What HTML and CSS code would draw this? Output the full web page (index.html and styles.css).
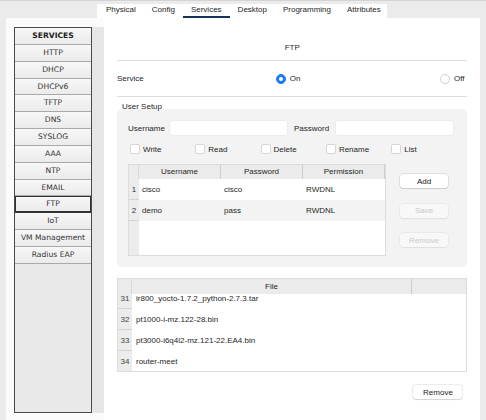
FILE: index.html
```html
<!DOCTYPE html>
<html>
<head>
    <title>Server - Services - FTP</title>
    <meta name="viewport" content="width=device-width, initial-scale=1">
    <link rel="stylesheet" href="styles.css">
</head>
<body>
    <div class="tabs">
        <span class="tab">Physical</span>
        <span class="tab">Config</span>
        <span class="tab active">Services</span>
        <span class="tab">Desktop</span>
        <span class="tab">Programming</span>
        <span class="tab">Attributes</span>
    </div>

    <div class="panel">
        <div class="side">
            <div class="side-wrap">
                <ul class="services">
                    <li class="head">SERVICES</li>
                    <li>HTTP</li>
                    <li>DHCP</li>
                    <li>DHCPv6</li>
                    <li>TFTP</li>
                    <li>DNS</li>
                    <li>SYSLOG</li>
                    <li>AAA</li>
                    <li>NTP</li>
                    <li>EMAIL</li>
                    <li class="active">FTP</li>
                    <li>IoT</li>
                    <li>VM Management</li>
                    <li>Radius EAP</li>
                </ul>
            </div>
        </div>

        <div class="content">
            <div class="title">FTP</div>
            <div class="service-row">
                <span>Service</span>
                <span class="radio radio-on"><span class="dot checked"></span>On</span>
                <span class="radio radio-off"><span class="dot"></span>Off</span>
            </div>

            <div class="legend">User Setup</div>
            <div class="setup">
                <div class="creds">
                    <span>Username</span>
                    <span class="field"></span>
                    <span></span>
                    <span>Password</span>
                    <span class="field"></span>
                </div>
                <div class="perms">
                    <span class="perm"><span class="check"></span>Write</span>
                    <span class="perm"><span class="check"></span>Read</span>
                    <span class="perm"><span class="check"></span>Delete</span>
                    <span class="perm"><span class="check"></span>Rename</span>
                    <span class="perm"><span class="check"></span>List</span>
                </div>
                <div class="users">
                    <div class="utable">
                        <div class="urow uhead"><span class="num"></span><span>Username</span><span>Password</span><span>Permission</span></div>
                        <div class="urow"><span class="num">1</span><span>cisco</span><span>cisco</span><span>RWDNL</span></div>
                        <div class="urow alt"><span class="num">2</span><span>demo</span><span>pass</span><span>RWDNL</span></div>
                        <div class="urow filler"><span class="num"></span></div>
                    </div>
                    <div class="actions">
                        <button>Add</button>
                        <button disabled>Save</button>
                        <button disabled>Remove</button>
                    </div>
                </div>
            </div>

            <div class="files">
                <div class="fhead"><span class="num"></span><span class="fname">File</span><span></span></div>
                <div class="fbody">
                    <div class="frow"><span class="num">31</span><span class="fname">ir800_yocto-1.7.2_python-2.7.3.tar</span></div>
                    <div class="frow"><span class="num">32</span><span class="fname">pt1000-i-mz.122-28.bin</span></div>
                    <div class="frow"><span class="num">33</span><span class="fname">pt3000-i6q4l2-mz.121-22.EA4.bin</span></div>
                    <div class="frow"><span class="num">34</span><span class="fname">router-meet</span></div>
                </div>
            </div>
            <div class="file-actions">
                <button class="wide">Remove</button>
            </div>
        </div>
    </div>
</body>
</html>
```

FILE: styles.css
```css
* {
    box-sizing: border-box;
}
body {
    margin: 0;
    height: 420px;
    overflow: hidden;
    background: #ebebeb;
    border-top: 1px solid #d4d4d4;
    font-family: "Liberation Sans", Arial, sans-serif;
    font-size: 8px;
    color: #262626;
}
.tabs {
    display: flex;
    width: 290px;
    height: 14px;
    margin: 3px 0 0 97px;
    padding-left: 1px;
    background: #fff;
}
.tab {
    height: 14px;
    padding: 0 8px;
    line-height: 12px;
    border-bottom: 2px solid transparent;
}
.tab.active {
    border-bottom-color: #14345a;
}
.panel {
    display: flex;
    height: 402px;
    margin: 0 6px;
    background: #fff;
}
.side {
    width: 98px;
    padding: 9px 0 0 8px;
    background: #fbfbfb;
}
.side-wrap {
    width: 90px;
    height: 386px;
    background: #e6e6e6;
}
.services {
    list-style: none;
    margin: 0;
    padding: 0;
    width: 78px;
    height: 100%;
    border: 1px solid #4a4a4a;
    background: #e9e9e9;
    font-family: "DejaVu Sans", Verdana, sans-serif;
    font-size: 7.6px;
    color: #333;
}
.services li {
    height: 16.85px;
    line-height: 15.85px;
    text-align: center;
    border-bottom: 1px solid #a9a9a9;
    background: linear-gradient(#f7f7f7, #ebebeb);
}
.services .head {
    font-weight: bold;
    color: #222;
}
.services .active {
    border-bottom-color: #333;
    box-shadow: inset 0 0 0 1px #333;
}
.content {
    flex: 1;
    padding: 24px 16px 0 13px;
}
.title {
    line-height: 12px;
    text-align: center;
    padding-bottom: 6px;
    border-bottom: 1px solid #dedede;
}
.service-row {
    display: flex;
    align-items: center;
    height: 36px;
    border-bottom: 1px solid #dedede;
}
.radio {
    display: flex;
    align-items: center;
    gap: 4px;
}
.radio-on {
    margin-left: 132px;
}
.radio-off {
    margin-left: auto;
    margin-right: 3px;
}
.dot {
    width: 10px;
    height: 10px;
    border-radius: 50%;
    border: 1px solid #d4d4d4;
    background: #fff;
    box-shadow: 0 0.5px 1px rgba(0, 0, 0, 0.06);
}
.dot.checked {
    display: flex;
    align-items: center;
    justify-content: center;
    border-color: #1c7cf3;
    background: #1c7cf3;
}
.dot.checked::after {
    content: "";
    width: 4px;
    height: 4px;
    border-radius: 50%;
    background: #fff;
}
.legend {
    padding: 5px 0 0 5px;
    line-height: 10px;
}
.setup {
    height: 158px;
    margin-top: -3px;
    padding: 12px 11px 11px;
    border-radius: 5px;
    background: #f3f3f3;
}
.creds {
    display: grid;
    grid-template-columns: 42px 117px 7px 42px 117px;
    align-items: center;
    height: 14px;
}
.field {
    height: 14px;
    border-radius: 2px;
    background: #fff;
    box-shadow: 0 0 0 0.5px #e6e6e6;
}
.perms {
    display: flex;
    height: 10px;
    margin-top: 9px;
    padding-left: 2px;
}
.perm {
    display: flex;
    align-items: center;
    gap: 3px;
    width: 65.3px;
}
.check {
    width: 10px;
    height: 10px;
    border: 1px solid #d6d6d6;
    border-radius: 2px;
    background: #fff;
}
.users {
    display: flex;
    align-items: flex-start;
    margin-top: 10px;
}
.utable {
    display: flex;
    flex-direction: column;
    width: 258px;
    height: 92px;
    border: 1px solid #dcdcdc;
    background: #fff;
}
.urow {
    display: flex;
    height: 21px;
    line-height: 21px;
}
.urow span {
    width: 82px;
    padding-left: 3px;
}
.urow .num {
    width: 10px;
    padding: 0;
    text-align: center;
    color: #333;
    background: #ececec;
    border-bottom: 1px solid #d4d4d4;
}
.urow.alt {
    background: #f3f3f3;
}
.uhead {
    height: 14px;
    line-height: 14px;
    background: #ebebeb;
}
.uhead span {
    padding: 0;
    text-align: center;
    border-right: 1px solid #cdcdcd;
}
.uhead .num {
    border-bottom: none;
    border-right: 1px solid #dadada;
}
.urow.filler {
    flex: 1;
}
.urow.filler .num {
    border-bottom: none;
}
.actions {
    display: flex;
    flex-direction: column;
    gap: 15.5px;
    margin: 10px 0 0 14px;
}
button {
    width: 48px;
    height: 14px;
    padding: 0;
    border: none;
    border-radius: 3px;
    font: inherit;
    color: #222;
    background: #fff;
    box-shadow: 0 0 0 0.5px rgba(0, 0, 0, 0.16), 0 1px 1px rgba(0, 0, 0, 0.1);
}
button:disabled {
    color: #cacaca;
    background: #f8f8f8;
    box-shadow: 0 0 0 0.5px rgba(0, 0, 0, 0.07), 0 1px 1px rgba(0, 0, 0, 0.04);
}
button.wide {
    width: 49px;
}
.files {
    height: 94px;
    margin-top: 11px;
    border: 1px solid #dcdcdc;
    background: #fff;
}
.fhead {
    display: flex;
    height: 15px;
    line-height: 15px;
    background: #ebebeb;
}
.fhead .num {
    width: 14px;
    border-right: 1px solid #dadada;
}
.fhead .fname {
    text-align: center;
    border-right: 1px solid #cdcdcd;
}
.fname {
    width: 280px;
}
.fbody {
    height: 77px;
    overflow: hidden;
}
.frow {
    display: flex;
    height: 21px;
    line-height: 21px;
}
.frow:first-child {
    margin-top: -6px;
}
.frow .num {
    width: 14px;
    text-align: center;
    color: #444;
    background: #ececec;
    border-bottom: 1px solid #d4d4d4;
}
.frow .fname {
    padding-left: 4px;
}
.file-actions {
    display: flex;
    justify-content: flex-end;
    margin-top: 13px;
    padding-right: 5px;
}
```
